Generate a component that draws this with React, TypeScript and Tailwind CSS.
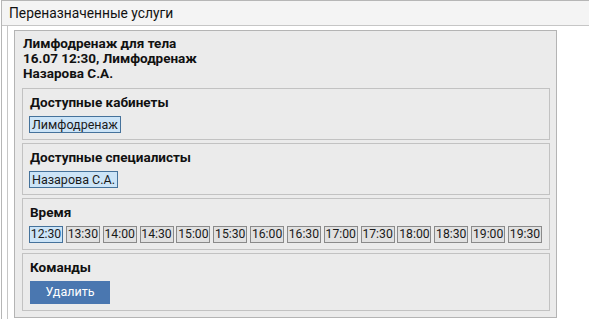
const times = [
  "12:30", "13:30", "14:00", "14:30", "15:00", "15:30", "16:00",
  "16:30", "17:00", "17:30", "18:00", "18:30", "19:00", "19:30",
];

function Section({ title, children }: { title: string; children: React.ReactNode }) {
  return (
    <div className="border border-[#c2c2c2] bg-[#ebebeb] px-[6px] pt-[4px] pb-[6px]">
      <div className="h-[18px] pl-[1px] text-[13.5px] font-bold leading-[18px] text-[#111]">{title}</div>
      <div className="mt-[5px] flex">{children}</div>
    </div>
  );
}

function Chip({ label, selected = false, fixed = false }: { label: string; selected?: boolean; fixed?: boolean }) {
  return (
    <div
      className={
        (selected ? "bg-[#cce4f7] border-[#45729b] " : "bg-[#e1e1e1] border-[#8a8a8a] ") +
        (fixed ? "w-[34px] justify-center text-[12.2px] " : "px-[2px] text-[12.5px] ") +
        "flex h-[17px] items-center border leading-[15px] text-[#1a1a1a]"
      }
    >
      {label}
    </div>
  );
}

export default function App() {
  return (
    <div
      className="h-[319px] w-[589px] overflow-hidden bg-white text-black"
      style={{ fontFamily: 'Roboto, "Noto Sans", sans-serif' }}
    >
      <div className="ml-[1px] h-full w-[620px] border-l border-t border-[#b6b6b6]">
        {/* Header */}
        <div className="flex h-[25px] items-center border-b border-[#c6c6c6] bg-[#f4f4f4] pl-[7px] text-[13.8px] text-[#111]">
          Переназначенные услуги
        </div>

        <div className="h-full pl-[5px]">
          <div className="h-full border-l border-[#c6c6c6] pl-[6px] pt-[4px]">
            {/* Card */}
            <div className="w-[543px] border border-[#b4b4b4] bg-[#ebebeb] px-[7px] pt-[5px] pb-[6px]">
              <div className="pl-[1px] text-[13.5px] font-bold leading-[15px] text-[#111]">
                <div>Лимфодренаж для тела</div>
                <div>16.07 12:30, Лимфодренаж</div>
                <div>Назарова С.А.</div>
              </div>

              <div className="mt-[7px] mr-[-1px] flex flex-col gap-[3px]">
                <Section title="Доступные кабинеты">
                  <Chip label="Лимфодренаж" selected />
                </Section>
                <Section title="Доступные специалисты">
                  <Chip label="Назарова С.А." selected />
                </Section>
                <Section title="Время">
                  <div className="flex gap-[2.85px]">
                    {times.map((t, i) => (
                      <Chip key={t} label={t} selected={i === 0} fixed />
                    ))}
                  </div>
                </Section>
                <div className="border border-[#c2c2c2] bg-[#ebebeb] px-[7px] pt-[4px] pb-[6px]">
                  <div className="h-[18px] text-[13.5px] font-bold leading-[18px] text-[#111]">Команды</div>
                  <button className="mt-[5px] flex h-[23px] w-[80px] items-center justify-center bg-[#4a77b0] text-[12.5px] text-white">
                    Удалить
                  </button>
                </div>
              </div>
            </div>
          </div>
        </div>
      </div>
    </div>
  );
}
